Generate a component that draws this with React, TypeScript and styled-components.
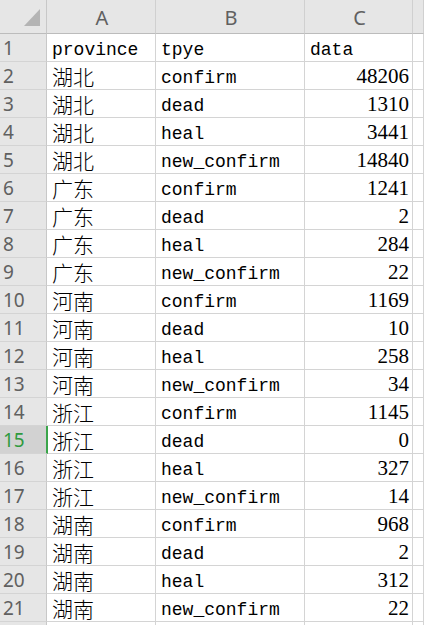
import React from "react";
import styled, { createGlobalStyle, css } from "styled-components";

const Global = createGlobalStyle`
  html, body { margin: 0; padding: 0; background: #ffffff; overflow: hidden; }
  * { box-sizing: border-box; }
`;

const Sheet = styled.div`
  display: grid;
  grid-template-columns: 47px 109px 149px 108px 1fr;
  grid-auto-rows: 28px;
  grid-template-rows: 34px;
  width: 424px;
  height: 625px;
  overflow: hidden;
`;

const Corner = styled.div`
  background: #e6e6e6;
  border-right: 1px solid #c8c8c8;
  border-bottom: 1px solid #bcbcbc;
  display: flex;
  align-items: flex-start;
  justify-content: flex-end;
  padding: 9px 6px 0 0;
`;

const ColHead = styled.div`
  background: #e6e6e6;
  border-right: 1px solid #d0d0d0;
  border-bottom: 1px solid #bcbcbc;
  display: flex;
  align-items: center;
  justify-content: center;
  font-family: "Noto Sans", "Liberation Sans", sans-serif;
  font-size: 20px;
  color: #606060;
  padding: 1px 0 0 2px;
`;

const RowHead = styled.div<{ $active?: boolean }>`
  background: #e6e6e6;
  border-right: 1px solid #c8c8c8;
  border-bottom: 1px solid #d4d4d4;
  display: flex;
  align-items: center;
  justify-content: flex-start;
  padding-left: 3px;
  font-family: "Noto Sans", "Liberation Sans", sans-serif;
  font-size: 19px;
  color: #606060;
  ${(p) =>
    p.$active &&
    css`
      background: #d2d2d2;
      color: #2f9a3e;
      border-right: 2px solid #3aa54a;
      margin-right: -1px;
      position: relative;
      z-index: 1;
    `}
`;

const Cell = styled.div<{ $num?: boolean; $cjk?: boolean }>`
  border-right: 1px solid #d4d4d4;
  border-bottom: 1px solid #d4d4d4;
  display: flex;
  align-items: center;
  white-space: nowrap;
  overflow: hidden;
  color: #000;
  padding: 4px 3px 0 5px;
  font-family: "Liberation Mono", monospace;
  font-size: 18px;
  ${(p) =>
    p.$num &&
    css`
      justify-content: flex-end;
      font-family: "Liberation Serif", serif;
      font-size: 21px;
      padding-top: 1px;
    `}
  ${(p) =>
    p.$cjk &&
    css`
      font-family: "Noto Sans CJK SC", sans-serif;
      font-size: 21px;
      font-weight: 300;
      padding-top: 0;
    `}
`;

const rows: [string, string, number][] = [
  ["湖北", "confirm", 48206],
  ["湖北", "dead", 1310],
  ["湖北", "heal", 3441],
  ["湖北", "new_confirm", 14840],
  ["广东", "confirm", 1241],
  ["广东", "dead", 2],
  ["广东", "heal", 284],
  ["广东", "new_confirm", 22],
  ["河南", "confirm", 1169],
  ["河南", "dead", 10],
  ["河南", "heal", 258],
  ["河南", "new_confirm", 34],
  ["浙江", "confirm", 1145],
  ["浙江", "dead", 0],
  ["浙江", "heal", 327],
  ["浙江", "new_confirm", 14],
  ["湖南", "confirm", 968],
  ["湖南", "dead", 2],
  ["湖南", "heal", 312],
  ["湖南", "new_confirm", 22],
];

export default function App() {
  return (
    <>
      <Global />
      <Sheet>
        <Corner>
          <svg width="16" height="17" viewBox="0 0 16 17">
            <polygon points="16,0 16,17 0,17" fill="#b4b4b4" />
          </svg>
        </Corner>
        <ColHead>A</ColHead>
        <ColHead>B</ColHead>
        <ColHead>C</ColHead>
        <ColHead />

        <RowHead>1</RowHead>
        <Cell>province</Cell>
        <Cell>tpye</Cell>
        <Cell>data</Cell>
        <Cell />

        {rows.map((r, i) => (
          <React.Fragment key={i}>
            <RowHead $active={i + 2 === 15}>{i + 2}</RowHead>
            <Cell $cjk>{r[0]}</Cell>
            <Cell>{r[1]}</Cell>
            <Cell $num>{r[2]}</Cell>
            <Cell />
          </React.Fragment>
        ))}

        <RowHead />
        <Cell />
        <Cell />
        <Cell />
        <Cell />
      </Sheet>
    </>
  );
}
